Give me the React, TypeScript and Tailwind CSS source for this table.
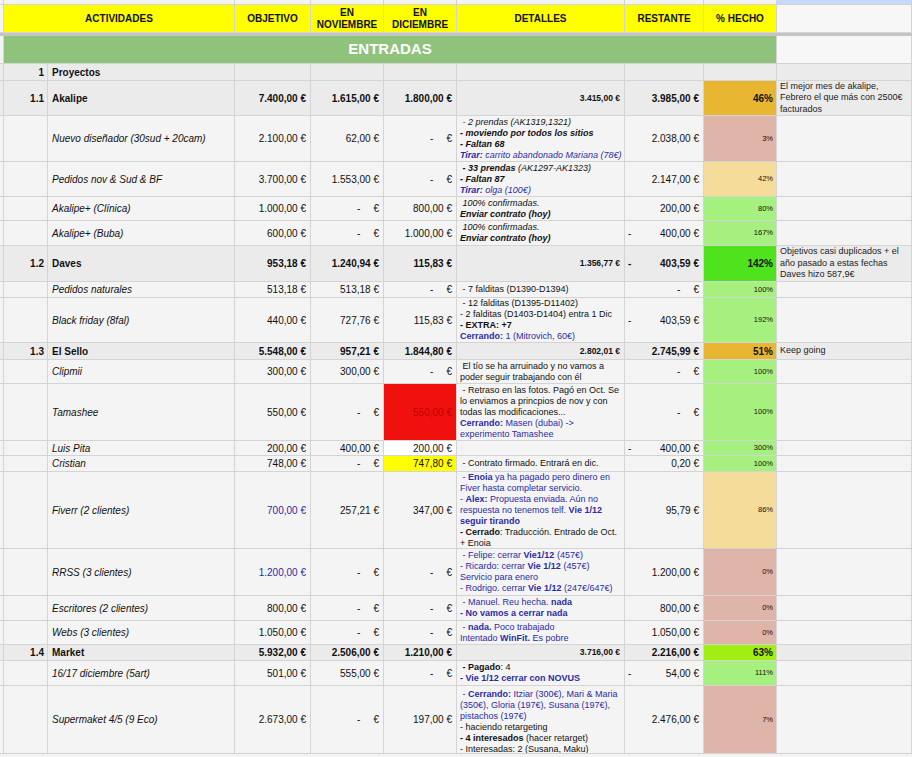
import React from 'react';

const cols = 'grid grid-cols-[4px_44px_187px_76px_73px_73px_168px_79px_73px_135px]';
const cell = 'border-r border-b border-[#d4d4d4] overflow-hidden';

const B = ({ children }: { children: React.ReactNode }) => <span className="font-bold">{children}</span>;
const Blue = ({ children }: { children: React.ReactNode }) => (
  <span className="text-[#2b2ba6]">{children}</span>
);

type Row = {
  h: string;
  group?: boolean;
  num?: string;
  label: string;
  obj?: string;
  objBlue?: boolean;
  nov?: string;
  dic?: string;
  dicCls?: string;
  det?: React.ReactNode[];
  detItalic?: boolean;
  detTop?: boolean;
  detAmount?: string;
  rest?: string;
  restNeg?: boolean;
  pct?: string;
  pctBg?: string;
  note?: string[];
};

const rows: Row[] = [
  { h: 'h-[17px]', group: true, num: '1', label: 'Proyectos' },
  {
    h: 'h-[35px]',
    group: true,
    num: '1.1',
    label: 'Akalipe',
    obj: '7.400,00',
    nov: '1.615,00',
    dic: '1.800,00',
    detAmount: '3.415,00 €',
    rest: '3.985,00',
    pct: '46%',
    pctBg: 'bg-[#e9b632]',
    note: ['El mejor mes de akalipe,', 'Febrero el que más con 2500€', 'facturados'],
  },
  {
    h: 'h-[46px]',
    label: 'Nuevo diseñador (30sud + 20cam)',
    obj: '2.100,00',
    nov: '62,00',
    dic: '-',
    detItalic: true,
    det: [
      <span> - 2 prendas (AK1319,1321)</span>,
      <B>- moviendo por todos los sitios</B>,
      <B>- Faltan 68</B>,
      <Blue>
        <B>Tirar:</B> carrito abandonado Mariana (78€)
      </Blue>,
    ],
    rest: '2.038,00',
    pct: '3%',
    pctBg: 'bg-[#dfb4a9]',
  },
  {
    h: 'h-[35px]',
    label: 'Pedidos nov & Sud & BF',
    obj: '3.700,00',
    nov: '1.553,00',
    dic: '-',
    detItalic: true,
    det: [
      <span>
        <B> - 33 prendas</B> (AK1297-AK1323)
      </span>,
      <B>- Faltan 87</B>,
      <Blue>
        <B>Tirar:</B> olga (100€)
      </Blue>,
    ],
    rest: '2.147,00',
    pct: '42%',
    pctBg: 'bg-[#f5dc9a]',
  },
  {
    h: 'h-[24px]',
    label: 'Akalipe+ (Clínica)',
    obj: '1.000,00',
    nov: '-',
    dic: '800,00',
    detItalic: true,
    det: [<span> 100% confirmadas.</span>, <B>Enviar contrato (hoy)</B>],
    rest: '200,00',
    pct: '80%',
    pctBg: 'bg-[#a5f07f]',
  },
  {
    h: 'h-[25px]',
    label: 'Akalipe+ (Buba)',
    obj: '600,00',
    nov: '-',
    dic: '1.000,00',
    detItalic: true,
    det: [<span> 100% confirmadas.</span>, <B>Enviar contrato (hoy)</B>],
    rest: '400,00',
    restNeg: true,
    pct: '167%',
    pctBg: 'bg-[#a5f07f]',
  },
  {
    h: 'h-[36px]',
    group: true,
    num: '1.2',
    label: 'Daves',
    obj: '953,18',
    nov: '1.240,94',
    dic: '115,83',
    detAmount: '1.356,77 €',
    rest: '403,59',
    restNeg: true,
    pct: '142%',
    pctBg: 'bg-[#4fe31d]',
    note: ['Objetivos casi duplicados + el', 'año pasado a estas fechas', 'Daves hizo 587,9€'],
  },
  {
    h: 'h-[16px]',
    label: 'Pedidos naturales',
    obj: '513,18',
    nov: '513,18',
    dic: '-',
    det: [<span> - 7 falditas (D1390-D1394)</span>],
    rest: '-',
    pct: '100%',
    pctBg: 'bg-[#a5f07f]',
  },
  {
    h: 'h-[45px]',
    label: 'Black friday (8fal)',
    obj: '440,00',
    nov: '727,76',
    dic: '115,83',
    det: [
      <span> - 12 falditas (D1395-D11402)</span>,
      <span>- 2 falditas (D1403-D1404) entra 1 Dic</span>,
      <B>- EXTRA: +7</B>,
      <Blue>
        <B>Cerrando:</B> 1 (Mitrovich, 60€)
      </Blue>,
    ],
    rest: '403,59',
    restNeg: true,
    pct: '192%',
    pctBg: 'bg-[#a5f07f]',
  },
  {
    h: 'h-[17px]',
    group: true,
    num: '1.3',
    label: 'El Sello',
    obj: '5.548,00',
    nov: '957,21',
    dic: '1.844,80',
    detAmount: '2.802,01 €',
    rest: '2.745,99',
    pct: '51%',
    pctBg: 'bg-[#e9b632]',
    note: ['Keep going'],
  },
  {
    h: 'h-[24px]',
    label: 'Clipmii',
    obj: '300,00',
    nov: '300,00',
    dic: '-',
    det: [<span> El tío se ha arruinado y no vamos a</span>, <span>poder seguir trabajando con él</span>],
    rest: '-',
    pct: '100%',
    pctBg: 'bg-[#a5f07f]',
  },
  {
    h: 'h-[57px]',
    label: 'Tamashee',
    obj: '550,00',
    nov: '-',
    dic: '550,00',
    dicCls: 'bg-[#f0110f] text-[#c00000]',
    det: [
      <span> - Retraso en las fotos. Pagó en Oct. Se</span>,
      <span>lo enviamos a princpios de nov y con</span>,
      <span>todas las modificaciones...</span>,
      <Blue>
        <B>Cerrando:</B> Masen (dubai) -&gt;
      </Blue>,
      <Blue>experimento Tamashee</Blue>,
    ],
    rest: '-',
    pct: '100%',
    pctBg: 'bg-[#a5f07f]',
  },
  {
    h: 'h-[15px]',
    label: 'Luis Pita',
    obj: '200,00',
    nov: '400,00',
    dic: '200,00',
    dicCls: 'bg-white',
    rest: '400,00',
    restNeg: true,
    pct: '300%',
    pctBg: 'bg-[#a5f07f]',
  },
  {
    h: 'h-[16px]',
    label: 'Cristian',
    obj: '748,00',
    nov: '-',
    dic: '747,80',
    dicCls: 'bg-[#ffff00]',
    det: [<span> - Contrato firmado. Entrará en dic.</span>],
    rest: '0,20',
    pct: '100%',
    pctBg: 'bg-[#a5f07f]',
  },
  {
    h: 'h-[77px]',
    label: 'Fiverr (2 clientes)',
    obj: '700,00',
    objBlue: true,
    nov: '257,21',
    dic: '347,00',
    det: [
      <Blue>
        {' - '}
        <B>Enoia</B> ya ha pagado pero dinero en
      </Blue>,
      <Blue>Fiver hasta completar servicio.</Blue>,
      <Blue>
        - <B>Alex:</B> Propuesta enviada. Aún no
      </Blue>,
      <Blue>
        respuesta no tenemos telf. <B>Vie 1/12</B>
      </Blue>,
      <Blue>
        <B>seguir tirando</B>
      </Blue>,
      <span>
        <B>- Cerrado</B>: Traducción. Entrado de Oct.
      </span>,
      <span>+ Enoia</span>,
    ],
    rest: '95,79',
    pct: '86%',
    pctBg: 'bg-[#f5dc9a]',
  },
  {
    h: 'h-[47px]',
    label: 'RRSS (3 clientes)',
    obj: '1.200,00',
    objBlue: true,
    nov: '-',
    dic: '-',
    det: [
      <Blue>
        {' - Felipe: cerrar '}
        <B>Vie1/12</B> (457€)
      </Blue>,
      <Blue>
        {'- Ricardo: cerrar '}
        <B>Vie 1/12</B> (457€)
      </Blue>,
      <Blue>Servicio para enero</Blue>,
      <Blue>
        {'- Rodrigo. cerrar '}
        <B>Vie 1/12</B> (247€/647€)
      </Blue>,
    ],
    rest: '1.200,00',
    pct: '0%',
    pctBg: 'bg-[#dfb4a9]',
  },
  {
    h: 'h-[25px]',
    label: 'Escritores (2 clientes)',
    obj: '800,00',
    nov: '-',
    dic: '-',
    det: [
      <Blue>
        {' - Manuel. Reu hecha. '}
        <B>nada</B>
      </Blue>,
      <Blue>
        <B>- No vamos a cerrar nada</B>
      </Blue>,
    ],
    rest: '800,00',
    pct: '0%',
    pctBg: 'bg-[#dfb4a9]',
  },
  {
    h: 'h-[24px]',
    label: 'Webs (3 clientes)',
    obj: '1.050,00',
    nov: '-',
    dic: '-',
    det: [
      <Blue>
        {' - '}
        <B>nada.</B> Poco trabajado
      </Blue>,
      <Blue>
        Intentado <B>WinFit.</B> Es pobre
      </Blue>,
    ],
    rest: '1.050,00',
    pct: '0%',
    pctBg: 'bg-[#dfb4a9]',
  },
  {
    h: 'h-[16px]',
    group: true,
    num: '1.4',
    label: 'Market',
    obj: '5.932,00',
    nov: '2.506,00',
    dic: '1.210,00',
    detAmount: '3.716,00 €',
    rest: '2.216,00',
    pct: '63%',
    pctBg: 'bg-[#a3ee12]',
  },
  {
    h: 'h-[25px]',
    label: '16/17 diciembre (5art)',
    obj: '501,00',
    nov: '555,00',
    dic: '-',
    det: [
      <span>
        <B> - Pagado</B>: 4
      </span>,
      <Blue>
        <B>- Vie 1/12 cerrar con NOVUS</B>
      </Blue>,
    ],
    rest: '54,00',
    restNeg: true,
    pct: '111%',
    pctBg: 'bg-[#a5f07f]',
  },
  {
    h: 'h-[68px]',
    label: 'Supermaket 4/5 (9 Eco)',
    obj: '2.673,00',
    nov: '-',
    dic: '197,00',
    detTop: true,
    det: [
      <Blue>
        {' - '}
        <B>Cerrando:</B> Itziar (300€), Mari &amp; Maria
      </Blue>,
      <Blue>(350€), Gloria (197€), Susana (197€),</Blue>,
      <Blue>pistachos (197€)</Blue>,
      <span>- haciendo retargeting</span>,
      <span>
        <B>- 4 interesados</B> (hacer retarget)
      </span>,
      <span>- Interesadas: 2 (Susana, Maku)</span>,
      <span>- Cerrando: Maku (197€)</span>,
    ],
    rest: '2.476,00',
    pct: '7%',
    pctBg: 'bg-[#dfb4a9]',
  },
];

const Money = ({ v }: { v?: string }) => {
  if (v === undefined) return null;
  if (v === '-')
    return (
      <span className="whitespace-pre">
        -<span className="ml-[13px]">€</span>
      </span>
    );
  return <span className="whitespace-pre">{v} €</span>;
};

const SheetRow = ({ r }: { r: Row }) => {
  const bg = r.group ? 'bg-[#ebebeb]' : 'bg-[#f4f4f4]';
  const weight = r.group ? 'font-bold' : '';
  const num = `${cell} flex items-center justify-end pr-[4px] text-[10px] ${weight}`;
  return (
    <div className={`${cols} ${r.h} ${bg} text-[#111]`}>
      <div className={cell} />
      <div className={`${cell} flex items-center justify-end pr-[3px] text-[10px] font-bold`}>{r.num}</div>
      <div
        className={`${cell} flex items-center pl-[4px] text-[10px] whitespace-nowrap ${
          r.group ? 'font-bold' : 'italic'
        }`}
      >
        {r.label}
      </div>
      <div className={`${num} ${r.objBlue ? 'text-[#2b2ba6]' : ''}`}>
        <Money v={r.obj} />
      </div>
      <div className={num}>
        <Money v={r.nov} />
      </div>
      <div className={`${num} ${r.dicCls ?? ''}`}>
        <Money v={r.dic} />
      </div>
      <div
        className={`${cell} flex flex-col pl-[3px] text-[9px] leading-[11px] ${
          r.detTop ? 'justify-start pt-[3px]' : 'justify-center'
        } ${r.detItalic ? 'italic' : ''}`}
      >
        {r.detAmount ? (
          <div className="self-end pr-[4px] text-[8.5px] font-bold">{r.detAmount}</div>
        ) : (
          r.det?.map((l, i) => (
            <div key={i} className="whitespace-pre">
              {l}
            </div>
          ))
        )}
      </div>
      <div
        className={`${cell} flex items-center pl-[3px] pr-[4px] text-[10px] ${weight} ${
          r.restNeg ? 'justify-between' : 'justify-end'
        }`}
      >
        {r.restNeg && <span>-</span>}
        <Money v={r.rest} />
      </div>
      <div
        className={`${cell} flex items-center justify-end pr-[3px] ${r.pctBg ?? ''} ${
          r.group ? 'text-[10px] font-bold' : 'text-[7.5px]'
        }`}
      >
        {r.pct}
      </div>
      <div className={`${cell} flex flex-col justify-center pl-[3px] text-[9px] leading-[11.5px] text-[#222]`}>
        {r.note?.map((n, i) => (
          <div key={i} className="whitespace-nowrap">
            {n}
          </div>
        ))}
      </div>
    </div>
  );
};

const App = () => {
  const head = `${cell} bg-[#ffff00] flex items-center justify-center text-center text-[10px] font-bold leading-[12px] text-[#111]`;
  return (
    <div className="w-[912px] h-[757px] overflow-hidden bg-[#f4f4f4] font-['Liberation_Sans',Arial,sans-serif]">
      <div className={`${cols} h-[5px]`}>
        <div className={cell} />
        <div className={`${cell} col-span-2`} />
        <div className={cell} />
        <div className={cell} />
        <div className={cell} />
        <div className={cell} />
        <div className={cell} />
        <div className={cell} />
        <div className={`${cell} bg-[#c9daf8]`} />
      </div>
      <div className={`${cols} h-[28px]`}>
        <div className={cell} />
        <div className={`${head} col-span-2`}>ACTIVIDADES</div>
        <div className={head}>OBJETIVO</div>
        <div className={head}>
          EN
          <br />
          NOVIEMBRE
        </div>
        <div className={head}>
          EN
          <br />
          DICIEMBRE
        </div>
        <div className={head}>DETALLES</div>
        <div className={head}>RESTANTE</div>
        <div className={head}>% HECHO</div>
        <div className={`${cell} bg-[#f7f7f7]`} />
      </div>
      <div className="h-[3px] bg-[#c4c4c4]" />
      <div className={`${cols} h-[28px]`}>
        <div className={cell} />
        <div
          className={`${cell} col-span-8 bg-[#8fc27b] flex items-center justify-center text-[15px] font-bold text-white`}
        >
          ENTRADAS
        </div>
        <div className={`${cell} bg-[#f7f7f7]`} />
      </div>
      {rows.map((r, i) => (
        <SheetRow key={i} r={r} />
      ))}
    </div>
  );
};

export default App;
